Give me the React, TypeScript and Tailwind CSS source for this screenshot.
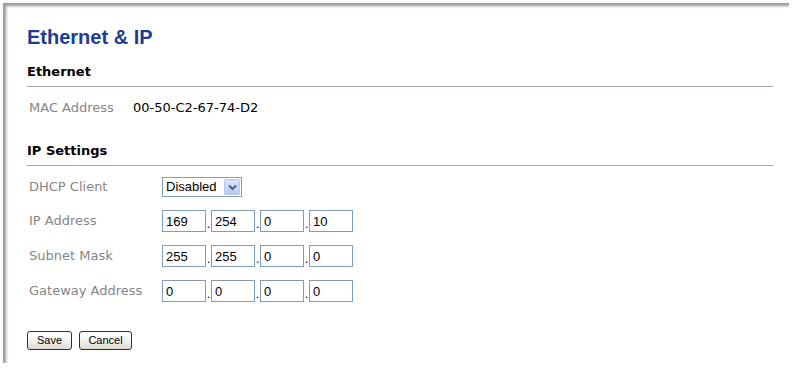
import type { ReactNode } from "react";

const verdana = "font-['DejaVu_Sans',Verdana,sans-serif]";
const arial = "font-['Liberation_Sans',Arial,sans-serif]";

function SectionHeader({ children }: { children: ReactNode }) {
  return (
    <div className="border-b border-[#aaa694] pb-[6px]">
      <h2 className={`${verdana} text-[13px] leading-[16px] font-bold text-black`}>{children}</h2>
    </div>
  );
}

function Label({ children, width }: { children: ReactNode; width: string }) {
  return (
    <span className={`${verdana} ${width} pl-[2px] text-[13px] leading-[16px] text-[#858585]`}>
      {children}
    </span>
  );
}

function Octets({ values }: { values: string[] }) {
  return (
    <div className="flex items-center">
      {values.map((v, i) => (
        <div key={i} className="flex items-center">
          {i > 0 && (
            <span className={`${arial} w-[5px] self-end pb-[2px] text-center text-[13px] leading-[13px] text-black`}>.</span>
          )}
          <input
            defaultValue={v}
            className={`${arial} h-[22px] w-[44px] border border-[#7f9db9] bg-white px-[3px] text-[13px] text-black outline-none`}
          />
        </div>
      ))}
    </div>
  );
}

function Select() {
  return (
    <div className="flex h-[20px] w-[80px] items-center justify-between border border-[#7f9db9] bg-white pl-[3px] pr-[1px]">
      <span className={`${arial} text-[13px] leading-[16px] text-black`}>Disabled</span>
      <span className="flex h-[16px] w-[16px] items-center justify-center rounded-[2px] border border-[#b4c8f2] bg-gradient-to-b from-[#dbe6fd] to-[#b6cbf7]">
        <svg width="9" height="7" viewBox="0 0 9 7">
          <path d="M1 1.5 L4.5 5 L8 1.5" fill="none" stroke="#4d6185" strokeWidth="2" />
        </svg>
      </span>
    </div>
  );
}

function FormRow({ label, children }: { label: string; children: ReactNode }) {
  return (
    <div className="flex h-[22px] items-center">
      <Label width="w-[135px]">{label}</Label>
      {children}
    </div>
  );
}

function Button({ children, width }: { children: ReactNode; width: string }) {
  return (
    <button
      className={`${arial} ${width} h-[19px] rounded-[3px] border border-[#003c74] bg-gradient-to-b from-white via-[#f4f4f0] to-[#dcdad0] text-[11px] leading-[15px] text-black`}
    >
      {children}
    </button>
  );
}

export default function App() {
  return (
    <div className="h-[374px] w-[794px] overflow-hidden bg-white">
      <div className="ml-[3px] mt-[3px] h-[360px] w-[786px] shadow-[inset_3px_3px_3px_rgba(0,0,0,0.4)] pl-[24px] pr-[16px] pt-[22px]">
        <h1 className={`${arial} text-[20px] leading-[24px] font-bold text-[#1b3c93]`}>Ethernet &amp; IP</h1>

        <div className="mt-[15px]">
          <SectionHeader>Ethernet</SectionHeader>
          <div className="mt-[13px] flex h-[16px] items-center">
            <Label width="w-[106px]">MAC Address</Label>
            <span className={`${verdana} text-[13px] leading-[16px] text-black`}>00-50-C2-67-74-D2</span>
          </div>
        </div>

        <div className="mt-[27px]">
          <SectionHeader>IP Settings</SectionHeader>
          <div className="mt-[10px] flex flex-col gap-[13px]">
            <div className="flex h-[22px] items-center">
              <Label width="w-[135px]">DHCP Client</Label>
              <Select />
            </div>
            <div className="-mt-[1px]">
              <FormRow label="IP Address">
                <Octets values={["169", "254", "0", "10"]} />
              </FormRow>
            </div>
            <FormRow label="Subnet Mask">
              <Octets values={["255", "255", "0", "0"]} />
            </FormRow>
            <FormRow label="Gateway Address">
              <Octets values={["0", "0", "0", "0"]} />
            </FormRow>
          </div>
        </div>

        <div className="mt-[29px] flex gap-[7px]">
          <Button width="w-[45px]">Save</Button>
          <Button width="w-[53px]">Cancel</Button>
        </div>
      </div>
    </div>
  );
}
